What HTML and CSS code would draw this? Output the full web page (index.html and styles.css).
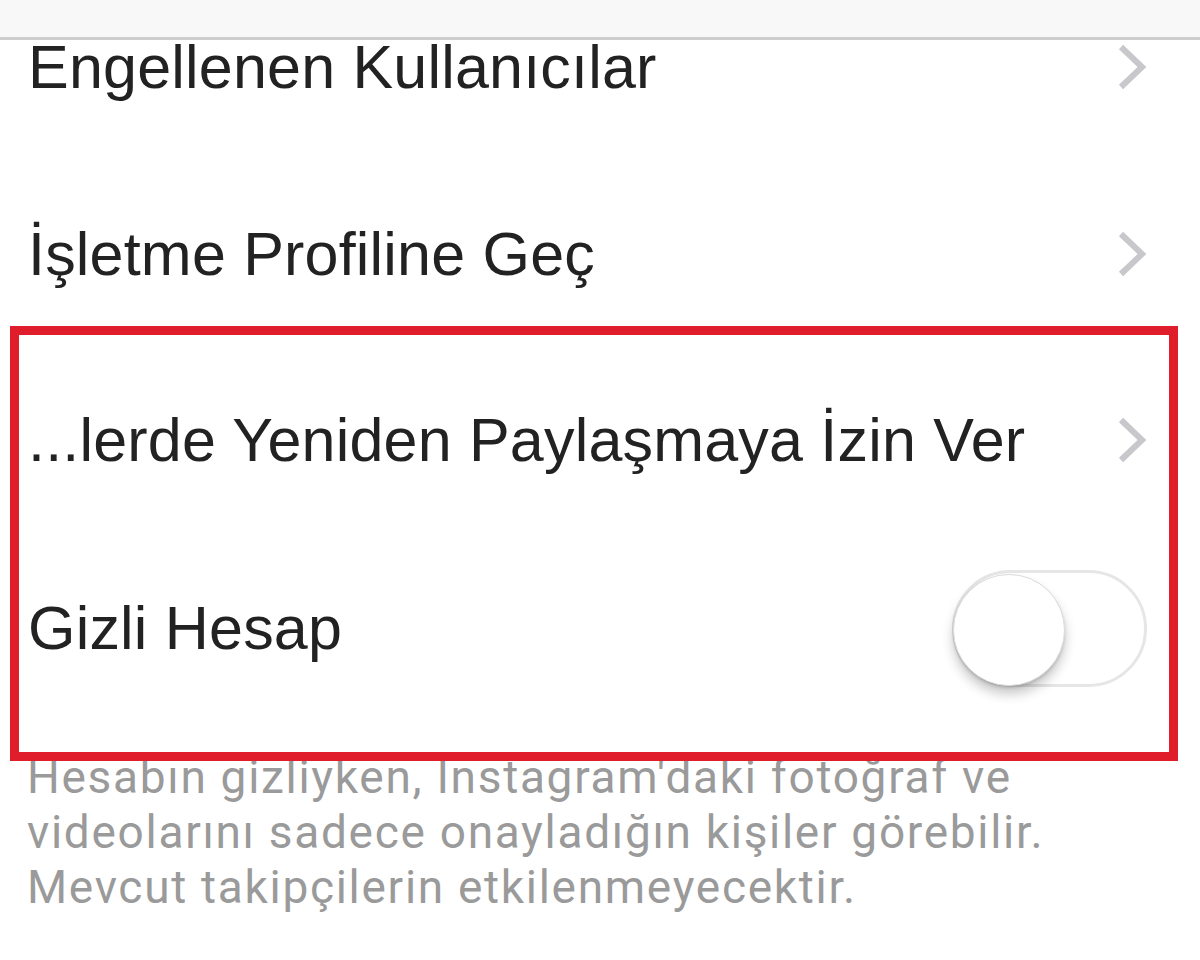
FILE: index.html
```html
<!DOCTYPE html>
<html lang="tr">
<head>
<meta charset="utf-8">
<title>Gizlilik</title>
<link rel="stylesheet" href="styles.css">
</head>
<body>
<div class="navbar"></div>
<main class="settings">
  <div class="row row-first">
    <span class="label">Engellenen Kullanıcılar</span>
    <svg class="chev" viewBox="0 0 30 48" width="30" height="48"><polyline points="4,4 25,24 4,44" fill="none" stroke="#c7c7cc" stroke-width="6"/></svg>
  </div>
  <div class="row row-second">
    <span class="label">İşletme Profiline Geç</span>
    <svg class="chev" viewBox="0 0 30 48" width="30" height="48"><polyline points="4,4 25,24 4,44" fill="none" stroke="#c7c7cc" stroke-width="6"/></svg>
  </div>
  <section class="highlight">
    <div class="row row-third">
      <span class="label">...lerde Yeniden Paylaşmaya İzin Ver</span>
      <svg class="chev" viewBox="0 0 30 48" width="30" height="48"><polyline points="4,4 25,24 4,44" fill="none" stroke="#c7c7cc" stroke-width="6"/></svg>
    </div>
    <div class="row row-fourth">
      <span class="label">Gizli Hesap</span>
      <div class="toggle"><div class="knob"></div></div>
    </div>
  </section>
  <p class="note">Hesabın gizliyken, Instagram'daki fotoğraf ve<br>videolarını sadece onayladığın kişiler görebilir.<br>Mevcut takipçilerin etkilenmeyecektir.</p>
</main>
</body>
</html>
```
FILE: styles.css
```css
html, body {
  margin: 0;
  padding: 0;
  background: #ffffff;
}
body {
  width: 1200px;
  height: 960px;
  overflow: hidden;
  position: relative;
  font-family: "Liberation Sans", Arial, sans-serif;
}
.navbar {
  position: absolute;
  top: 0;
  left: 0;
  right: 0;
  height: 37px;
  background: #f8f8f8;
  border-bottom: 3px solid #cdcdcd;
  z-index: 2;
}
.settings {
  display: flex;
  flex-direction: column;
}
.row {
  display: flex;
  align-items: center;
  justify-content: space-between;
  height: 70px;
}
.label {
  font-size: 61px;
  line-height: 70px;
  color: #222222;
  letter-spacing: 0.2px;
  white-space: nowrap;
}
.chev {
  display: block;
  flex: none;
}
.row-first {
  margin-top: 32px;
  padding: 0 53px 0 28px;
}
.row-second {
  margin-top: 117px;
  padding: 0 53px 0 28px;
}
.highlight {
  margin: 37px 0 0 10px;
  width: 1150px;
  border: 9px solid #e01e2b;
  padding: 70px 0 89px 0;
}
.row-third {
  padding: 0 22px 0 9px;
}
.row-fourth {
  margin-top: 118px;
  padding: 0 22px 0 9px;
}
.toggle {
  position: relative;
  width: 189px;
  height: 111px;
  border: 3px solid #e6e6e6;
  border-radius: 60px;
  background: #ffffff;
  flex: none;
}
.knob {
  position: absolute;
  left: -2px;
  top: 1px;
  width: 110px;
  height: 110px;
  border-radius: 50%;
  background: #ffffff;
  border: 1px solid #dcdcdc;
  box-shadow: 0 8px 12px rgba(0, 0, 0, 0.22), 0 2px 3px rgba(0, 0, 0, 0.12);
}
.note {
  position: relative;
  z-index: 0;
  margin: -11px 0 0 27px;
  font-family: Roboto, "Liberation Sans", sans-serif;
  font-size: 46px;
  line-height: 55px;
  color: #9a9a9a;
  letter-spacing: 1.7px;
  white-space: nowrap;
}
.highlight {
  position: relative;
  z-index: 1;
}
```
